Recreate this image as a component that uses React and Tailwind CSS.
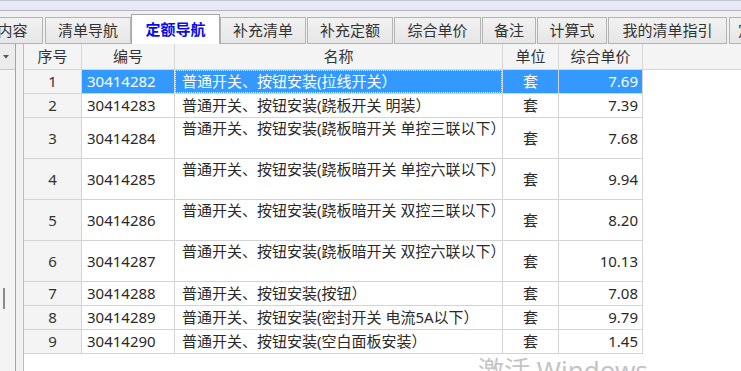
import React from "react";

const tabs = [
  { label: "内容", cls: "ml-[-18px] w-[61px]" },
  { label: "清单导航", cls: "ml-[2px] w-[86px]" },
  { label: "定额导航", cls: "w-[89px]", active: true },
  { label: "补充清单", cls: "w-[86px]" },
  { label: "补充定额", cls: "ml-[1px] w-[86px]" },
  { label: "综合单价", cls: "ml-[1px] w-[87px]" },
  { label: "备注", cls: "ml-[1px] w-[54px]" },
  { label: "计算式", cls: "ml-[1px] w-[70px]" },
  { label: "我的清单指引", cls: "ml-[1px] w-[119px]" },
  { label: "定额指引", cls: "ml-[2px] w-[78px]" },
];

const rows = [
  { n: 1, code: "30414282", name: "普通开关、按钮安装(拉线开关）", price: "7.69", tall: false, sel: true },
  { n: 2, code: "30414283", name: "普通开关、按钮安装(跷板开关 明装）", price: "7.39", tall: false },
  { n: 3, code: "30414284", name: "普通开关、按钮安装(跷板暗开关 单控三联以下）", price: "7.68", tall: true },
  { n: 4, code: "30414285", name: "普通开关、按钮安装(跷板暗开关 单控六联以下）", price: "9.94", tall: true },
  { n: 5, code: "30414286", name: "普通开关、按钮安装(跷板暗开关 双控三联以下）", price: "8.20", tall: true },
  { n: 6, code: "30414287", name: "普通开关、按钮安装(跷板暗开关 双控六联以下）", price: "10.13", tall: true },
  { n: 7, code: "30414288", name: "普通开关、按钮安装(按钮）", price: "7.08", tall: false },
  { n: 8, code: "30414289", name: "普通开关、按钮安装(密封开关 电流5A以下）", price: "9.79", tall: false },
  { n: 9, code: "30414290", name: "普通开关、按钮安装(空白面板安装）", price: "1.45", tall: false },
];

const font = { fontFamily: "'Noto Sans', 'Noto Sans CJK SC', sans-serif" };

export default function App() {
  return (
    <div
      className="relative w-[741px] h-[371px] overflow-hidden bg-white text-[15px] text-[#2a2a2a]"
      style={font}
    >
      {/* top strip */}
      <div className="h-[11px] border-t border-b border-t-[#c4c4cc] border-b-[#b4b4c0] bg-[#e8e8f6]" />
      {/* tab bar */}
      <div className="h-[33px] bg-[#f0f0f0] flex items-end whitespace-nowrap">
        {tabs.map((t) =>
          t.active ? (
            <div
              key={t.label}
              className={`${t.cls} shrink-0 h-[30px] bg-white border border-b-0 border-[#a8a8a8] flex items-center justify-center font-bold text-[#0a0aee] leading-none`}
            >
              {t.label}
            </div>
          ) : (
            <div
              key={t.label}
              className={`${t.cls} shrink-0 h-[27px] bg-gradient-to-b from-[#f2f2f2] to-[#e6e6e6] border border-[#b4b4b4] flex items-center justify-center text-[#333] leading-none`}
            >
              {t.label}
            </div>
          )
        )}
      </div>
      {/* grid area */}
      <div className="flex h-[327px]">
        {/* left panel */}
        <div className="w-[16px] shrink-0 border-r border-[#a4a4a4] bg-[#f4f4f4] flex flex-col">
          <div className="h-[26px] border-b border-[#c8c8c8] bg-[#ececec] flex items-center pl-[3px]">
            <svg width="6" height="4" viewBox="0 0 6 4">
              <path d="M0 0 L6 0 L3 3.5 Z" fill="#555" />
            </svg>
          </div>
          <div className="pl-[3px] mt-[218px]">
            <div className="w-[2px] h-[21px] bg-[#8a8a8a]" />
          </div>
        </div>
        <div className="w-[8px] shrink-0 border-r border-[#bcbcbc] bg-[#f0f0f0]" />
        {/* table */}
        <div className="flex-1 flex flex-col">
          <div className="h-[26px] flex bg-[#f4f4f4] border-b border-[#d4d4d4] text-[#333] leading-none">
            <div className="w-[58px] shrink-0 border-r border-[#d8d8d8] flex items-center justify-center">序号</div>
            <div className="w-[93px] shrink-0 border-r border-[#d8d8d8] flex items-center justify-center">编号</div>
            <div className="w-[328px] shrink-0 border-r border-[#d8d8d8] flex items-center justify-center">名称</div>
            <div className="w-[56px] shrink-0 border-r border-[#d8d8d8] flex items-center justify-center">单位</div>
            <div className="w-[84px] shrink-0 border-r border-[#d8d8d8] flex items-center justify-center">综合单价</div>
            <div className="flex-1" />
          </div>
          {rows.map((r) => {
            const h = r.tall ? "h-[41px]" : "h-[24px]";
            const sel = r.sel;
            const cellBg = sel ? "bg-[#3399ff] text-white" : "bg-white";
            return (
              <div key={r.n} className={`${h} flex whitespace-nowrap`}>
                <div className="w-[58px] shrink-0 border-r border-b border-[#d4d4d4] bg-[#f4f4f4] flex items-center justify-center text-[#333]">
                  {r.n}
                </div>
                <div className={`w-[93px] shrink-0 border-r border-b border-[#d4d4d4] ${cellBg} flex items-center pl-[5px]`}>
                  {r.code}
                </div>
                <div className={`w-[328px] shrink-0 border-r border-b border-[#d4d4d4] ${cellBg} overflow-hidden`}>
                  {sel ? (
                    <div className="h-full border border-dotted border-white flex items-center pl-[6px]">{r.name}</div>
                  ) : (
                    <div className={`pl-[7px] ${r.tall ? "pt-[1px] leading-[18px]" : "h-full flex items-center"}`}>{r.name}</div>
                  )}
                </div>
                <div className={`w-[56px] shrink-0 border-r border-b border-[#d4d4d4] ${cellBg} flex items-center justify-center`}>
                  套
                </div>
                <div className={`w-[84px] shrink-0 border-r border-b border-[#d4d4d4] ${cellBg} flex items-center justify-end pr-[4px]`}>
                  {r.price}
                </div>
                <div className="flex-1" />
              </div>
            );
          })}
        </div>
      </div>
      {/* watermark */}
      <div className="absolute left-[478px] top-[357px] text-[26px] leading-none text-[#c4c4c4] whitespace-nowrap">
        激活 Windows
      </div>
    </div>
  );
}
